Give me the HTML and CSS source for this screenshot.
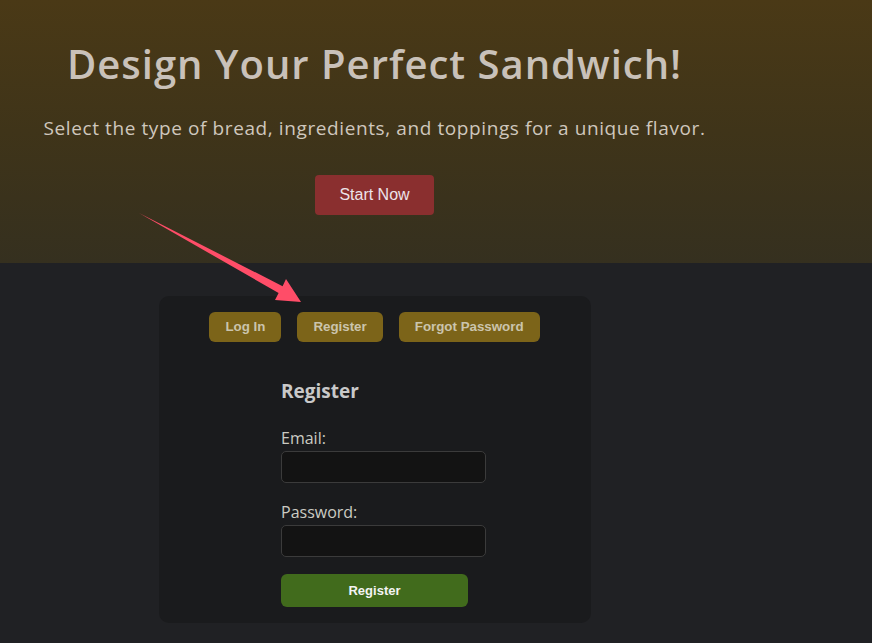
FILE: index.html
```html
<!DOCTYPE html>
<html lang="en">
<head>
<meta charset="utf-8">
<title>Design Your Perfect Sandwich!</title>
<link rel="stylesheet" href="styles.css">
</head>
<body>
<header class="hero">
  <div class="hero-inner">
    <h1 class="hero-title">Design Your Perfect Sandwich!</h1>
    <p class="hero-sub">Select the type of bread, ingredients, and toppings for a unique flavor.</p>
    <button class="start-btn">Start Now</button>
  </div>
</header>
<main class="main">
  <section class="card">
    <nav class="tabs">
      <button class="tab">Log In</button>
      <button class="tab">Register</button>
      <button class="tab">Forgot Password</button>
    </nav>
    <form class="form">
      <h2 class="form-title">Register</h2>
      <label class="label" for="email">Email:</label>
      <input class="input" id="email" type="email">
      <label class="label label-pw" for="pw">Password:</label>
      <input class="input" id="pw" type="password">
      <button type="button" class="submit">Register</button>
    </form>
  </section>
</main>
<svg class="arrow" width="872" height="643" viewBox="0 0 872 643">
  <polygon points="139,213 282.6,286.2 286,279 301,302 275,300 278.6,293" fill="#ff4d68"/>
</svg>
</body>
</html>
```

FILE: styles.css
```css
* { box-sizing: border-box; }
html, body { margin: 0; padding: 0; }
body {
  background: #202124;
  font-family: "Open Sans", "Noto Sans", sans-serif;
  width: 872px;
  height: 643px;
  overflow: hidden;
  position: relative;
}
.hero {
  height: 263px;
  background: linear-gradient(180deg, #4a3916 0%, #3f3419 50%, #35301f 100%);
}
.hero-inner {
  width: 749px;
  display: flex;
  flex-direction: column;
  align-items: center;
  padding-top: 38px;
}
.hero-title {
  margin: 0;
  font-size: 40px;
  line-height: 52px;
  font-weight: 600;
  color: #c9c1b9;
  letter-spacing: 1px;
}
.hero-sub {
  margin: 25px 0 0;
  font-size: 19px;
  line-height: 26px;
  font-weight: 400;
  color: #cfc7bd;
  letter-spacing: 0.6px;
}
.start-btn {
  margin-top: 34px;
  border: none;
  background: #8a2f2f;
  color: #ece3ea;
  font-family: "Liberation Sans", Arial, sans-serif;
  font-size: 16px;
  line-height: 18px;
  padding: 11px 24px;
  border-radius: 4px;
  width: 119px;
}
.main {
  width: 749px;
  display: flex;
  justify-content: center;
  padding-top: 33px;
}
.card {
  width: 432px;
  background: #1a1b1d;
  border-radius: 10px;
  padding: 16px 0 16px;
  display: flex;
  flex-direction: column;
  align-items: center;
}
.tabs {
  display: flex;
  gap: 16px;
}
.tab {
  border: none;
  background: #7c6419;
  color: #cbc4ad;
  font-family: "Liberation Sans", Arial, sans-serif;
  font-weight: 700;
  font-size: 13.333px;
  line-height: 16px;
  padding: 7px 16px;
  border-radius: 6px;
}
.form {
  width: 187px;
  margin: 0;
  display: flex;
  flex-direction: column;
}
.form-title {
  margin: 37px 0 0;
  font-size: 19px;
  line-height: 24px;
  font-weight: 700;
  color: #c9c9c9;
}
.label {
  margin-top: 25px;
  font-size: 16px;
  line-height: 20px;
  color: #cbcbc3;
  font-weight: 400;
}
.label-pw { margin-top: 19px; }
.input {
  margin-top: 3px;
  width: 205px;
  height: 32px;
  background: #131313;
  border: 1px solid #3b3b3b;
  border-radius: 5px;
  color: #ddd;
  padding: 0 8px;
}
.submit {
  margin-top: 17px;
  width: 187px;
  height: 33px;
  border: none;
  border-radius: 6px;
  background: #416b1c;
  color: #f4f4f4;
  font-family: "Liberation Sans", Arial, sans-serif;
  font-weight: 700;
  font-size: 13px;
}
.arrow {
  position: absolute;
  left: 0;
  top: 0;
  pointer-events: none;
}
```
